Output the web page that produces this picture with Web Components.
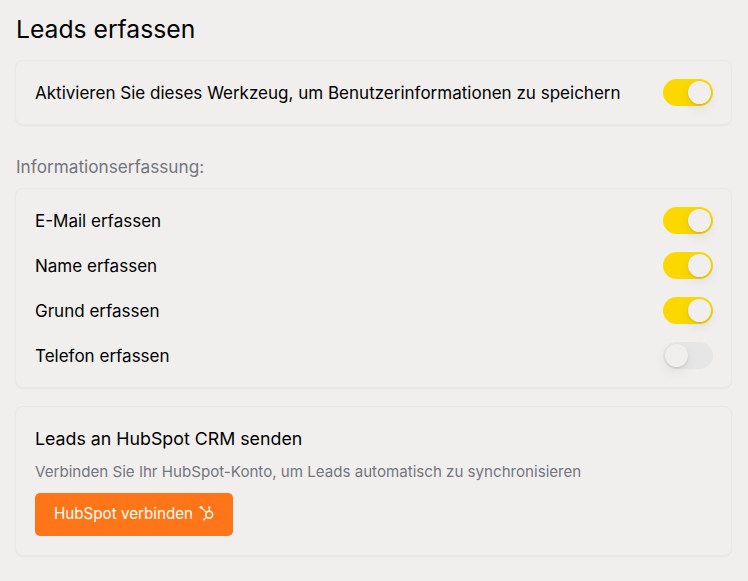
<!DOCTYPE html>
<html lang="de">
<head>
<meta charset="utf-8">
<title>Leads erfassen</title>
<style>
    html, body { margin: 0; background: #f1efee; }
    body {
        font-family: Inter, "Liberation Sans", sans-serif;
        color: #000;
        height: 581px;
        overflow: hidden;
    }
</style>
</head>
<body>
<template id="lead-page-tpl">
    <style>
        :host { display: flex; flex-direction: column; padding: 12px 16px 0 15px; }
        h1 { margin: 0 0 14px 1px; font-size: 24.7px; line-height: 34px; font-weight: 400; }
    </style>
    <h1>Leads erfassen</h1>
    <slot></slot>
</template>
<template id="lead-card-tpl">
    <style>
        :host {
            display: flex;
            flex-direction: column;
            gap: 18px;
            background: #f1efee;
            border: 1px solid #e9e8e6;
            border-radius: 8px;
            box-shadow: 0 1px 2px rgba(0, 0, 0, 0.04);
            padding: 18px 18px 18px 19px;
            margin-bottom: 18px;
        }
        :host([stack]) { gap: 0; padding: 19px 18px 19px 19px; }
    </style>
    <slot></slot>
</template>
<template id="lead-row-tpl">
    <style>
        :host { display: flex; align-items: center; justify-content: space-between; height: 27px; font-size: 17.03px; }
    </style>
    <span><slot></slot></span>
    <lead-switch></lead-switch>
</template>
<template id="lead-switch-tpl">
    <style>
        :host { display: block; position: relative; width: 50px; height: 27px; border-radius: 14px; background: #e6e6e6; }
        :host([on]) { background: #fcd800; }
        i {
            position: absolute;
            top: 2px;
            left: 2px;
            width: 23px;
            height: 23px;
            border-radius: 50%;
            background: #f1efee;
            box-shadow: 0 1px 2px rgba(0, 0, 0, 0.1), 0 5px 12px rgba(0, 0, 0, 0.07);
        }
        :host([on]) i { left: 25px; }
    </style>
    <i></i>
</template>
<template id="lead-button-tpl">
    <style>
        :host {
            display: inline-flex;
            box-sizing: border-box;
            align-self: flex-start;
            align-items: center;
            gap: 5px;
            height: 43px;
            padding: 0 17px 2px 19px;
            border-radius: 5px;
            background: #ff7518;
            color: #fff;
            font-size: 15.2px;
        }
        svg { width: 18px; height: 18px; display: block; margin-top: 1px; }
    </style>
    <slot></slot>
    <svg viewBox="0 0 18 18" fill="none" stroke="#fff">
        <circle cx="11.2" cy="9.7" r="3.4" stroke-width="1.5"/>
        <path d="M11.3 6V2.5M8.6 7.4 3 2.3M8.8 12.2 6 14.5" stroke-width="1.1"/>
        <circle cx="3" cy="2.3" r="1.4" fill="#fff" stroke="none"/>
        <circle cx="11.3" cy="2.3" r="1.1" fill="#fff" stroke="none"/>
        <circle cx="6" cy="14.5" r="1" fill="#fff" stroke="none"/>
    </svg>
</template>

<lead-page>
    <lead-card><lead-row on>Aktivieren Sie dieses Werkzeug, um Benutzerinformationen zu speichern</lead-row></lead-card>
    <lead-heading>Informationserfassung:</lead-heading>
    <lead-card>
        <lead-row on>E-Mail erfassen</lead-row>
        <lead-row on>Name erfassen</lead-row>
        <lead-row on>Grund erfassen</lead-row>
        <lead-row>Telefon erfassen</lead-row>
    </lead-card>
    <lead-card stack>
        <lead-title>Leads an HubSpot CRM senden</lead-title>
        <lead-note>Verbinden Sie Ihr HubSpot-Konto, um Leads automatisch zu synchronisieren</lead-note>
        <lead-button>HubSpot verbinden</lead-button>
    </lead-card>
</lead-page>

<script>
    function fromTemplate(el, id) {
        el.attachShadow({ mode: 'open' });
        el.shadowRoot.appendChild(document.getElementById(id).content.cloneNode(true));
    }

    class LeadPage extends HTMLElement {
        constructor() {
            super();
            fromTemplate(this, 'lead-page-tpl');
        }
    }

    class LeadCard extends HTMLElement {
        constructor() {
            super();
            fromTemplate(this, 'lead-card-tpl');
        }
    }

    class LeadSwitch extends HTMLElement {
        constructor() {
            super();
            fromTemplate(this, 'lead-switch-tpl');
        }
    }

    class LeadRow extends HTMLElement {
        constructor() {
            super();
            fromTemplate(this, 'lead-row-tpl');
        }

        connectedCallback() {
            if (this.hasAttribute('on')) {
                this.shadowRoot.querySelector('lead-switch').setAttribute('on', '');
            }
        }
    }

    class LeadButton extends HTMLElement {
        constructor() {
            super();
            fromTemplate(this, 'lead-button-tpl');
        }
    }

    // plain text blocks, only the style differs
    function textElement(css) {
        return class extends HTMLElement {
            constructor() {
                super();
                this.attachShadow({ mode: 'open' });
                this.shadowRoot.innerHTML = `<style>:host { display: block; ${css} }</style><slot></slot>`;
            }
        };
    }

    customElements.define('lead-page', LeadPage);
    customElements.define('lead-card', LeadCard);
    customElements.define('lead-switch', LeadSwitch);
    customElements.define('lead-row', LeadRow);
    customElements.define('lead-button', LeadButton);
    customElements.define('lead-heading', textElement('margin: 12px 0 10px 1px; font-size: 17.2px; line-height: 23px; color: #73767e;'));
    customElements.define('lead-title', textElement('font-size: 17.8px; line-height: 26px;'));
    customElements.define('lead-note', textElement('margin: 10px 0 11px; font-size: 15.12px; line-height: 20px; color: #73767e;'));
</script>
</body>
</html>
